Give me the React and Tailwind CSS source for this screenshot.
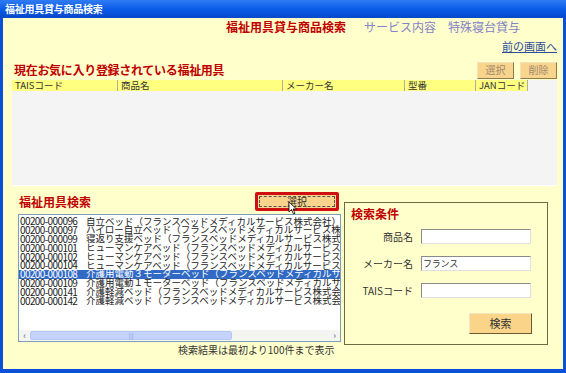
import React from 'react';

const rows = [
  ['00200-000096', '自立ベッド（フランスベッドメディカルサービス株式会社）'],
  ['00200-000097', 'ハイロー自立ベッド（フランスベッドメディカルサービス株式会社）'],
  ['00200-000099', '寝返り支援ベッド（フランスベッドメディカルサービス株式会社）'],
  ['00200-000101', 'ヒューマンケアベッド（フランスベッドメディカルサービス株式会社）'],
  ['00200-000102', 'ヒューマンケアベッド（フランスベッドメディカルサービス株式会社）'],
  ['00200-000104', 'ヒューマンケアベッド（フランスベッドメディカルサービス株式会社）'],
  ['00200-000108', '介護用電動３モーターベッド（フランスベッドメディカルサービス株式会社）'],
  ['00200-000109', '介護用電動１モーターベッド（フランスベッドメディカルサービス株式会社）'],
  ['00200-000141', '介護軽減ベッド（フランスベッドメディカルサービス株式会社）'],
  ['00200-000142', '介護軽減ベッド（フランスベッドメディカルサービス株式会社）'],
];

const font = { fontFamily: '"Noto Sans CJK JP", "Noto Sans", sans-serif' };

function SmallButton({ children, className = "" }) {
  return (
    <button className={"h-[17px] bg-[#F9D48C] border border-[#F3E2B8] border-r-[#8C7A4A] border-b-[#8C7A4A] text-[10px] leading-none text-[#A08870] " + className}>
      {children}
    </button>
  );
}

export default function App() {
  return (
    <div className="w-[566px] h-[373px] bg-[#0B50D8] flex flex-col overflow-hidden" style={font}>
      {/* title bar */}
      <div className="h-[18px] shrink-0 bg-gradient-to-b from-[#2F7BF5] via-[#0A5CE8] to-[#0648C8] flex items-center px-[5px]">
        <span className="text-white text-[10px] font-bold leading-none tracking-tight">福祉用具貸与商品検索</span>
      </div>

      {/* client */}
      <div className="flex-1 mx-[3px] mb-[4px] bg-[#FFFFCC] flex flex-col">
        <div className="h-[15px] shrink-0 flex items-end pl-[223px]">
          <span className="text-[12px] leading-none font-bold text-[#C00000]">福祉用具貸与商品検索</span>
          <span className="ml-[18px] text-[12px] leading-none text-[#8282C8]">サービス内容　特殊寝台貸与</span>
        </div>
        <div className="h-[19px] shrink-0 flex items-end justify-end pr-[6px]">
          <span className="text-[11px] leading-none text-[#2C4E98] underline">前の画面へ</span>
        </div>

        <div className="h-[28px] shrink-0 flex items-center pl-[11px] pr-[6px] pt-[8px]">
          <span className="text-[12px] leading-none font-bold text-[#C00000] tracking-tight">現在お気に入り登録されている福祉用具</span>
          <SmallButton className="ml-auto w-[37px]">選択</SmallButton>
          <SmallButton className="ml-[6px] w-[37px]">削除</SmallButton>
        </div>

        {/* favorites table */}
        <div className="ml-[9px] mr-[6px] h-[106px] shrink-0 bg-[#F4F4F4] border-b border-[#FFFFFF]">
          <div className="flex h-[11px] text-[9.5px] leading-[11px] text-[#333] whitespace-nowrap">
            <div className="w-[106px] bg-[#FFFF80] border-r border-[#B0B0A0] pl-[3px]">TAISコード</div>
            <div className="w-[165px] bg-[#FFFF80] border-r border-[#B0B0A0] pl-[3px]">商品名</div>
            <div className="w-[122px] bg-[#FFFF80] border-r border-[#B0B0A0] pl-[3px]">メーカー名</div>
            <div className="w-[71px] bg-[#FFFF80] border-r border-[#B0B0A0] pl-[3px]">型番</div>
            <div className="w-[52px] bg-[#FFFF80] border-r border-[#B0B0A0] pl-[3px] overflow-hidden">JANコード</div>
          </div>
        </div>

        {/* search area */}
        <div className="flex mt-[6px]">
          <div className="w-[338px] flex flex-col">
            <div className="h-[19px] flex items-center">
              <span className="ml-[16px] text-[12px] leading-none font-bold text-[#C00000]">福祉用具検索</span>
              <div className="ml-auto mr-[2px] w-[84px] h-[19px] border-[3px] border-[#D01010] rounded-[2px] p-[1px] bg-[#F9D48C] relative">
                <div className="w-full h-full border border-dashed border-[#555] flex items-center justify-center text-[10px] leading-none text-[#333]">選択</div>
                <svg className="absolute left-[30px] top-[6px]" width="10" height="14" viewBox="0 0 10 14">
                  <path d="M1 1 L1 11 L3.5 8.5 L5.5 13 L7 12.3 L5 8 L8.5 8 Z" fill="#fff" stroke="#000" strokeWidth="0.8" />
                </svg>
              </div>
            </div>
            <div className="ml-[15px] mt-[3px] h-[128px] bg-white border border-[#7F9DB9] flex flex-col overflow-hidden">
              <div className="flex-1 overflow-hidden pt-[2px]">
                {rows.map((r, i) => (
                  <div key={r[0]} className={"flex h-[8.8px] items-center whitespace-nowrap text-[9.5px] leading-none " + (i === 6 ? "bg-[#316AC5] text-white" : "text-[#222]")}>
                    <span className="shrink-0 w-[67px] pl-[1px] text-[10px] tracking-[-0.6px]">{r[0]}</span>
                    <span>{r[1]}</span>
                  </div>
                ))}
              </div>
              <div className="h-[11px] shrink-0 flex items-center bg-[#F4F4F0]">
                <div className="w-[11px] h-[11px] flex items-center justify-center text-[#4D6185] text-[9px]">‹</div>
                <div className="w-[202px] h-[9px] bg-[#C3D3FD] rounded-[2px] border border-[#B4C8F6] flex items-center justify-center text-[6px] text-[#8AA0DD]">|||</div>
                <div className="ml-auto w-[11px] h-[11px] flex items-center justify-center text-[#4D6185] text-[9px]">›</div>
              </div>
            </div>
            <div className="mt-[3px] pl-[175px] text-[10px] leading-none text-[#333]">検索結果は最初より100件まで表示</div>
          </div>

          <div className="ml-[3px] mt-[10px] w-[204px] h-[143px] border border-[#6E6A40] flex flex-col">
            <div className="pl-[6px] pt-[5px] text-[12px] leading-none font-bold text-[#C00000]">検索条件</div>
            <div className="mt-[9px] flex flex-col gap-[12px] text-[10px] leading-none text-[#333]">
              <div className="flex items-center">
                <span className="w-[68px] text-right">商品名</span>
                <div className="ml-[8px] w-[110px] h-[15px] bg-white border border-[#8A8A8A] border-r-[#E0E0E0] border-b-[#E0E0E0]" />
              </div>
              <div className="flex items-center">
                <span className="w-[68px] text-right">メーカー名</span>
                <div className="ml-[8px] w-[110px] h-[15px] bg-white border border-[#8A8A8A] border-r-[#E0E0E0] border-b-[#E0E0E0] flex items-center pl-[1px] text-[9px] tracking-tight">フランス</div>
              </div>
              <div className="flex items-center">
                <span className="w-[68px] text-right">TAISコード</span>
                <div className="ml-[8px] w-[110px] h-[15px] bg-white border border-[#8A8A8A] border-r-[#E0E0E0] border-b-[#E0E0E0]" />
              </div>
            </div>
            <div className="flex justify-end pr-[15px] mt-[15px]">
              <button className="w-[63px] h-[21px] bg-[#FAD489] border border-[#F6E6C0] border-r-[#6E5A30] border-b-[#6E5A30] text-[11px] leading-none text-[#333]">検索</button>
            </div>
          </div>
        </div>
      </div>
    </div>
  );
}
